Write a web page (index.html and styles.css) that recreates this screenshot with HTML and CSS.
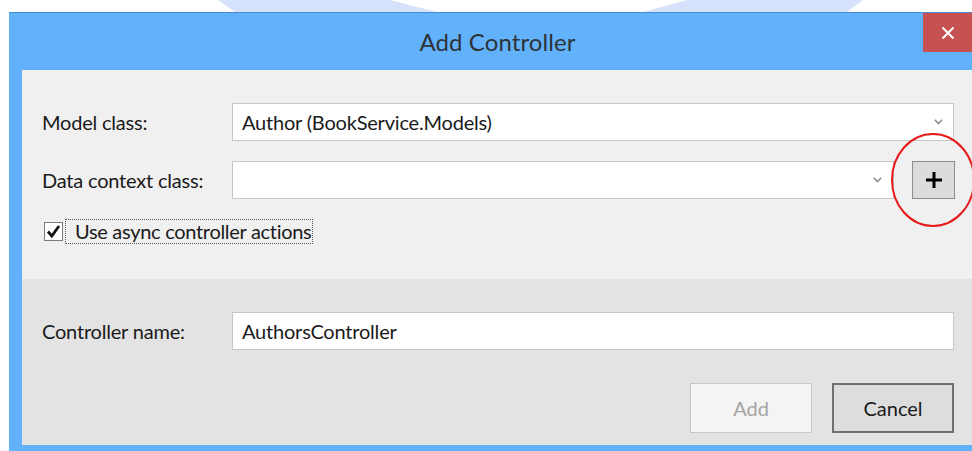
FILE: index.html
```html
<!DOCTYPE html>
<html lang="en">
<head>
<meta charset="utf-8">
<title>Add Controller</title>
<link rel="stylesheet" href="styles.css">
</head>
<body>
<div class="backdrop">
  <svg class="backdrop-art" width="972" height="12" viewBox="0 0 972 12">
    <polygon points="218,0 390,0 437,12 235,12" fill="#d6e2fb"/>
    <polygon points="687,0 863,0 847,12 643,12" fill="#d6e2fb"/>
  </svg>
</div>

<div class="window">
  <div class="titlebar">
    <h1 class="title">Add Controller</h1>
    <button class="close" type="button" aria-label="Close">
      <svg width="14" height="14" viewBox="0 0 14 14">
        <path d="M1.5 1.5 L12.5 12.5 M12.5 1.5 L1.5 12.5" stroke="#fff" stroke-width="2" fill="none"/>
      </svg>
    </button>
  </div>

  <div class="options">
    <div class="row">
      <label class="label">Model class:</label>
      <div class="combo combo-wide">
        <span class="combo-text">Author (BookService.Models)</span>
        <svg class="chevron" width="9" height="6" viewBox="0 0 9 6"><path d="M0.8 0.8 L4.5 4.6 L8.2 0.8" stroke="#8c8c8c" stroke-width="1.5" fill="none"/></svg>
      </div>
    </div>

    <div class="row">
      <label class="label">Data context class:</label>
      <div class="combo combo-short">
        <span class="combo-text"></span>
        <svg class="chevron" width="9" height="6" viewBox="0 0 9 6"><path d="M0.8 0.8 L4.5 4.6 L8.2 0.8" stroke="#8c8c8c" stroke-width="1.5" fill="none"/></svg>
      </div>
      <div class="plus-wrap">
        <button class="plus" type="button" aria-label="Add data context">
          <svg width="18" height="18" viewBox="0 0 18 18"><path d="M9 1 V17 M1 9 H17" stroke="#000" stroke-width="3" fill="none"/></svg>
        </button>
        <svg class="ring" width="86" height="96" viewBox="0 0 86 96"><ellipse cx="43" cy="48" rx="41" ry="46" stroke="#e41c1c" stroke-width="2" fill="none"/></svg>
      </div>
    </div>

    <div class="check-row">
      <span class="checkbox">
        <svg width="17" height="17" viewBox="0 0 17 17"><path d="M3 8.5 L6.8 13 L14 3" stroke="#111" stroke-width="2.8" fill="none"/></svg>
      </span>
      <span class="check-label">Use async controller actions</span>
    </div>
  </div>

  <div class="footer">
    <div class="row">
      <label class="label">Controller name:</label>
      <div class="textbox">AuthorsController</div>
    </div>
    <div class="actions">
      <button class="btn btn-disabled" type="button">Add</button>
      <button class="btn btn-default" type="button">Cancel</button>
    </div>
  </div>
</div>
</body>
</html>
```

FILE: styles.css
```css
html, body {
  margin: 0;
  padding: 0;
  background: #ffffff;
  overflow: hidden;
  width: 972px;
  height: 451px;
}

body {
  font-family: Lato, "Open Sans", sans-serif;
  color: #1a1a1a;
}

.backdrop {
  height: 12px;
}

.backdrop-art {
  display: block;
}

.window {
  margin-left: 9px;
  width: 951px;
  border-top: 1px solid #4a8bcf;
  background: #62b2fb;
  padding: 0 13px 10px;
}

.titlebar {
  position: relative;
  height: 57px;
  display: flex;
  align-items: center;
  justify-content: center;
}

.title {
  margin: 0;
  font-size: 24px;
  font-weight: 400;
  color: #2e3338;
  letter-spacing: 0.1px;
}

.close {
  position: absolute;
  top: 0;
  left: 901px;
  width: 50px;
  height: 39px;
  border: 0;
  padding: 0;
  background: #c75050;
  display: flex;
  align-items: center;
  justify-content: center;
}

.options {
  background: #f0f0f0;
  padding: 33px 19px 35px 20px;
  display: flex;
  flex-direction: column;
  gap: 20px;
}

.footer {
  background: #e3e3e3;
  padding: 33px 19px 12px 20px;
  display: flex;
  flex-direction: column;
  gap: 33px;
}

.row {
  display: flex;
  align-items: center;
  height: 38px;
}

.label {
  width: 190px;
  flex: none;
  font-size: 20px;
  letter-spacing: -0.2px;
}

.combo,
.textbox {
  box-sizing: border-box;
  height: 38px;
  background: #ffffff;
  border: 1px solid #c6c6c6;
  display: flex;
  align-items: center;
  padding-left: 9px;
  font-size: 20px;
  letter-spacing: -0.2px;
}

.combo-wide,
.textbox {
  flex: 1;
}

.combo-short {
  width: 662px;
  flex: none;
}

.combo-text {
  flex: 1;
}

.chevron {
  margin-right: 10px;
}

.combo-short .chevron {
  margin-right: 11px;
}

.plus-wrap {
  position: relative;
  margin-left: 18px;
  width: 43px;
  height: 38px;
}

.plus {
  box-sizing: border-box;
  width: 43px;
  height: 38px;
  padding: 0;
  background: #dcdcdc;
  border: 1px solid #8e8e8e;
  display: flex;
  align-items: center;
  justify-content: center;
}

.ring {
  position: absolute;
  left: -22px;
  top: -29px;
  pointer-events: none;
}

.check-row {
  display: flex;
  align-items: center;
  height: 25px;
  margin-left: 2px;
}

.checkbox {
  box-sizing: border-box;
  width: 19px;
  height: 19px;
  border: 1px solid #7a7a7a;
  background: #ffffff;
  display: flex;
  align-items: center;
  justify-content: center;
  margin-right: 2px;
}

.check-label {
  box-sizing: border-box;
  height: 25px;
  border: 1px dotted #5a5a5a;
  padding: 0 1px 0 9px;
  white-space: nowrap;
  font-size: 20px;
  line-height: 22px;
  letter-spacing: -0.3px;
}

.actions {
  display: flex;
  justify-content: flex-end;
  gap: 20px;
}

.btn {
  box-sizing: border-box;
  width: 122px;
  height: 50px;
  font-family: Lato, "Open Sans", sans-serif;
  font-size: 20px;
  padding: 0;
}

.btn-disabled {
  background: #f4f4f4;
  border: 1px solid #c7c7c7;
  color: #a3a3a3;
}

.btn-default {
  background: #dddddd;
  border: 2px solid #6f6f6f;
  color: #1a1a1a;
}
```
